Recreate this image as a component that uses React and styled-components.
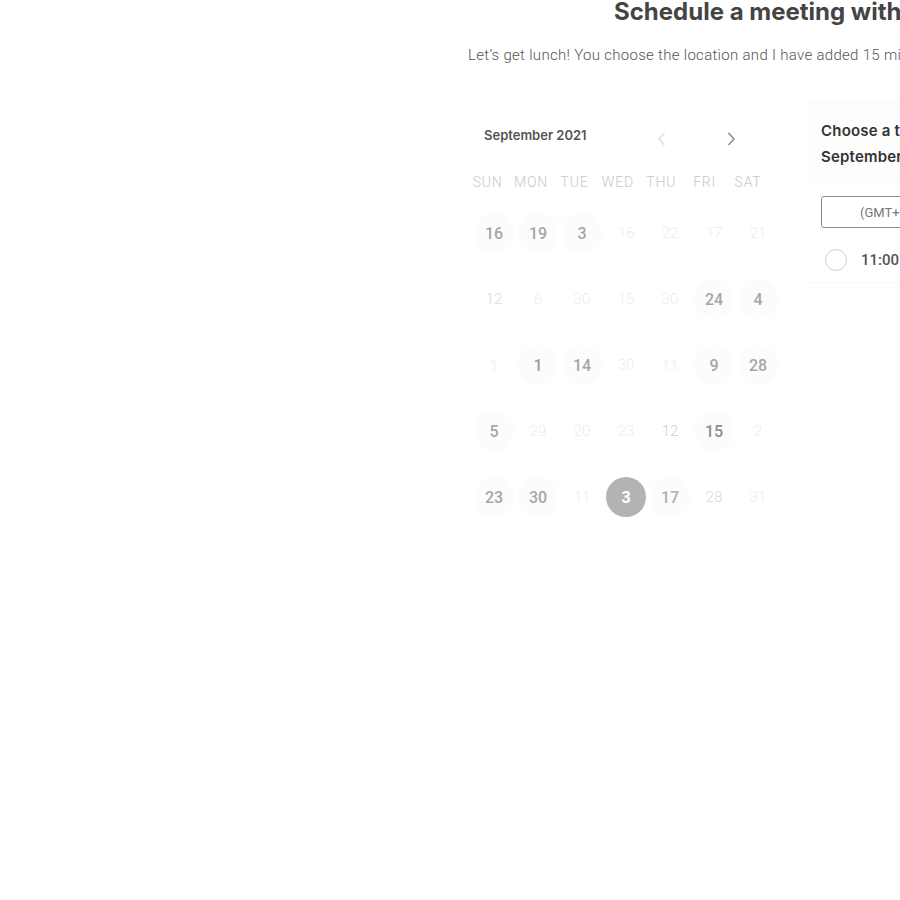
import React from "react";
import styled, { createGlobalStyle } from "styled-components";

const Global = createGlobalStyle`
  html, body { margin: 0; padding: 0; background: #fff; overflow: hidden; }
  body { font-family: Roboto, "Liberation Sans", sans-serif; }
`;

const Page = styled.div`
  width: 900px;
  height: 900px;
  overflow: hidden;
`;

const Main = styled.div`
  margin-left: 468px;
  width: 1000px;
`;

const Title = styled.h1`
  margin: 0;
  padding: 1px 0 0 146px;
  font-family: Inter, "Liberation Sans", sans-serif;
  font-weight: 700;
  font-size: 24px;
  line-height: 22px;
  color: #444;
  white-space: nowrap;
`;

const Subtitle = styled.p`
  margin: 22px 0 0;
  font-size: 15px;
  font-weight: 300;
  letter-spacing: 0.3px;
  line-height: 20px;
  color: #555;
  white-space: nowrap;
`;

const Content = styled.div`
  display: flex;
  gap: 28px;
  margin-top: 37px;
  align-items: flex-start;
`;

const Calendar = styled.div`
  width: 308px;
  padding: 18px 0 0 4px;
`;

const CalHeader = styled.div`
  display: flex;
  align-items: center;
  height: 30px;
  padding-left: 12px;
`;

const Month = styled.div`
  font-family: Inter, "Liberation Sans", sans-serif;
  font-weight: 600;
  font-size: 13px;
  color: #555;
  width: 170px;
`;

const NavBtn = styled.button`
  border: 0;
  background: none;
  padding: 0;
  margin-top: 8px;
  width: 16px;
  height: 16px;
  display: flex;
  align-items: center;
  justify-content: center;
  color: ${(p) => (p.$disabled ? "#ddd" : "#888")};
  margin-left: ${(p) => p.$ml}px;
`;

const Weekdays = styled.div`
  display: grid;
  grid-template-columns: repeat(7, 43.4px);
  margin: 20px 0 0 -6px;
  height: 24px;
  align-items: center;
`;

const Weekday = styled.div`
  font-size: 14px;
  font-weight: 300;
  letter-spacing: 0.8px;
  text-align: center;
  color: #c8c8c8;
`;

const Grid = styled.div`
  display: grid;
  grid-template-columns: repeat(7, 44px);
  grid-auto-rows: 66px;
  margin-top: 6px;
`;

const Cell = styled.div`
  display: flex;
  align-items: center;
  justify-content: center;
`;

const Day = styled.div`
  width: 40px;
  height: 40px;
  border-radius: 50%;
  display: flex;
  align-items: center;
  justify-content: center;
  font-size: ${(p) => (p.$kind === "off" ? 15 : 16)}px;
  font-weight: ${(p) => (p.$kind === "off" ? 300 : p.$kind === "sel" ? 700 : 500)};
  color: ${(p) => p.$color};
  background: ${(p) =>
    p.$kind === "sel" ? "#b3b3b3" : p.$kind === "on" ? "#fcfcfc" : "transparent"};
`;

const Panel = styled.div`
  width: 400px;
`;

const Card = styled.div`
  padding: 16px 13px 13px;
  background: #fdfdfd;
  box-shadow: 0 0 4px rgba(0, 0, 0, 0.03);
  font-family: Inter, "Liberation Sans", sans-serif;
  font-weight: 600;
  font-size: 15px;
  letter-spacing: 0.2px;
  line-height: 26px;
  color: #333;
  white-space: nowrap;
`;

const Select = styled.div`
  margin: 13px 0 0 13px;
  height: 32px;
  box-sizing: border-box;
  border: 1px solid #8a8a8a;
  border-radius: 3px;
  display: flex;
  align-items: center;
  padding-left: 38px;
  font-size: 13px;
  color: #777;
  white-space: nowrap;
`;

const TimeRow = styled.div`
  margin-top: 10px;
  height: 44px;
  display: flex;
  align-items: center;
  padding-left: 17px;
  gap: 14px;
  border-bottom: 1px solid #f8f8f8;
`;

const Radio = styled.span`
  width: 22px;
  height: 22px;
  box-sizing: border-box;
  border-radius: 50%;
  border: 1px solid #cfcfcf;
`;

const Time = styled.span`
  font-size: 15px;
  font-weight: 500;
  color: #555;
`;

const Chevron = ({ dir }) => (
  <svg width="10" height="16" viewBox="0 0 10 16" fill="none" stroke="currentColor" strokeWidth="1.5">
    {dir === "left" ? <path d="M7.5 2 L2 8 L7.5 14" /> : <path d="M2.5 2 L8 8 L2.5 14" />}
  </svg>
);

const weekdays = ["SUN", "MON", "TUE", "WED", "THU", "FRI", "SAT"];

const A = "#a6a6a6";
const OFF = "#ececec";
const rows = [
  [["16", "on", A], ["19", "on", A], ["3", "on", A], ["16", "off", OFF], ["22", "off", OFF], ["17", "off", OFF], ["21", "off", OFF]],
  [["12", "off", "#dcdcdc"], ["6", "off", OFF], ["30", "off", OFF], ["15", "off", OFF], ["30", "off", OFF], ["24", "on", A], ["4", "on", A]],
  [["1", "off", OFF], ["1", "on", "#9a9a9a"], ["14", "on", A], ["30", "off", OFF], ["11", "off", OFF], ["9", "on", A], ["28", "on", A]],
  [["5", "on", A], ["29", "off", OFF], ["20", "off", OFF], ["23", "off", OFF], ["12", "off", "#cccccc"], ["15", "on", "#8c8c8c"], ["2", "off", OFF]],
  [["23", "on", A], ["30", "on", A], ["11", "off", OFF], ["3", "sel", "#fff"], ["17", "on", "#b0b0b0"], ["28", "off", "#dadada"], ["31", "off", OFF]],
];

export default function App() {
  return (
    <Page>
      <Global />
      <Main>
        <Title>Schedule a meeting with Jessica Parker</Title>
        <Subtitle>
          Let’s get lunch! You choose the location and I have added 15 minutes of travel time before and after our lunch.
        </Subtitle>
        <Content>
          <Calendar>
            <CalHeader>
              <Month>September 2021</Month>
              <NavBtn $disabled $ml={0}>
                <Chevron dir="left" />
              </NavBtn>
              <NavBtn $ml={53}>
                <Chevron dir="right" />
              </NavBtn>
            </CalHeader>
            <Weekdays>
              {weekdays.map((w) => (
                <Weekday key={w}>{w}</Weekday>
              ))}
            </Weekdays>
            <Grid>
              {rows.flat().map(([n, kind, color], i) => (
                <Cell key={i}>
                  <Day $kind={kind} $color={color}>
                    {n}
                  </Day>
                </Cell>
              ))}
            </Grid>
          </Calendar>
          <Panel>
            <Card>
              <div>Choose a time on Friday,</div>
              <div>September 3, 2021</div>
            </Card>
            <Select>(GMT+05:30) India Standard Time</Select>
            <TimeRow>
              <Radio />
              <Time>11:00 AM</Time>
            </TimeRow>
          </Panel>
        </Content>
      </Main>
    </Page>
  );
}
